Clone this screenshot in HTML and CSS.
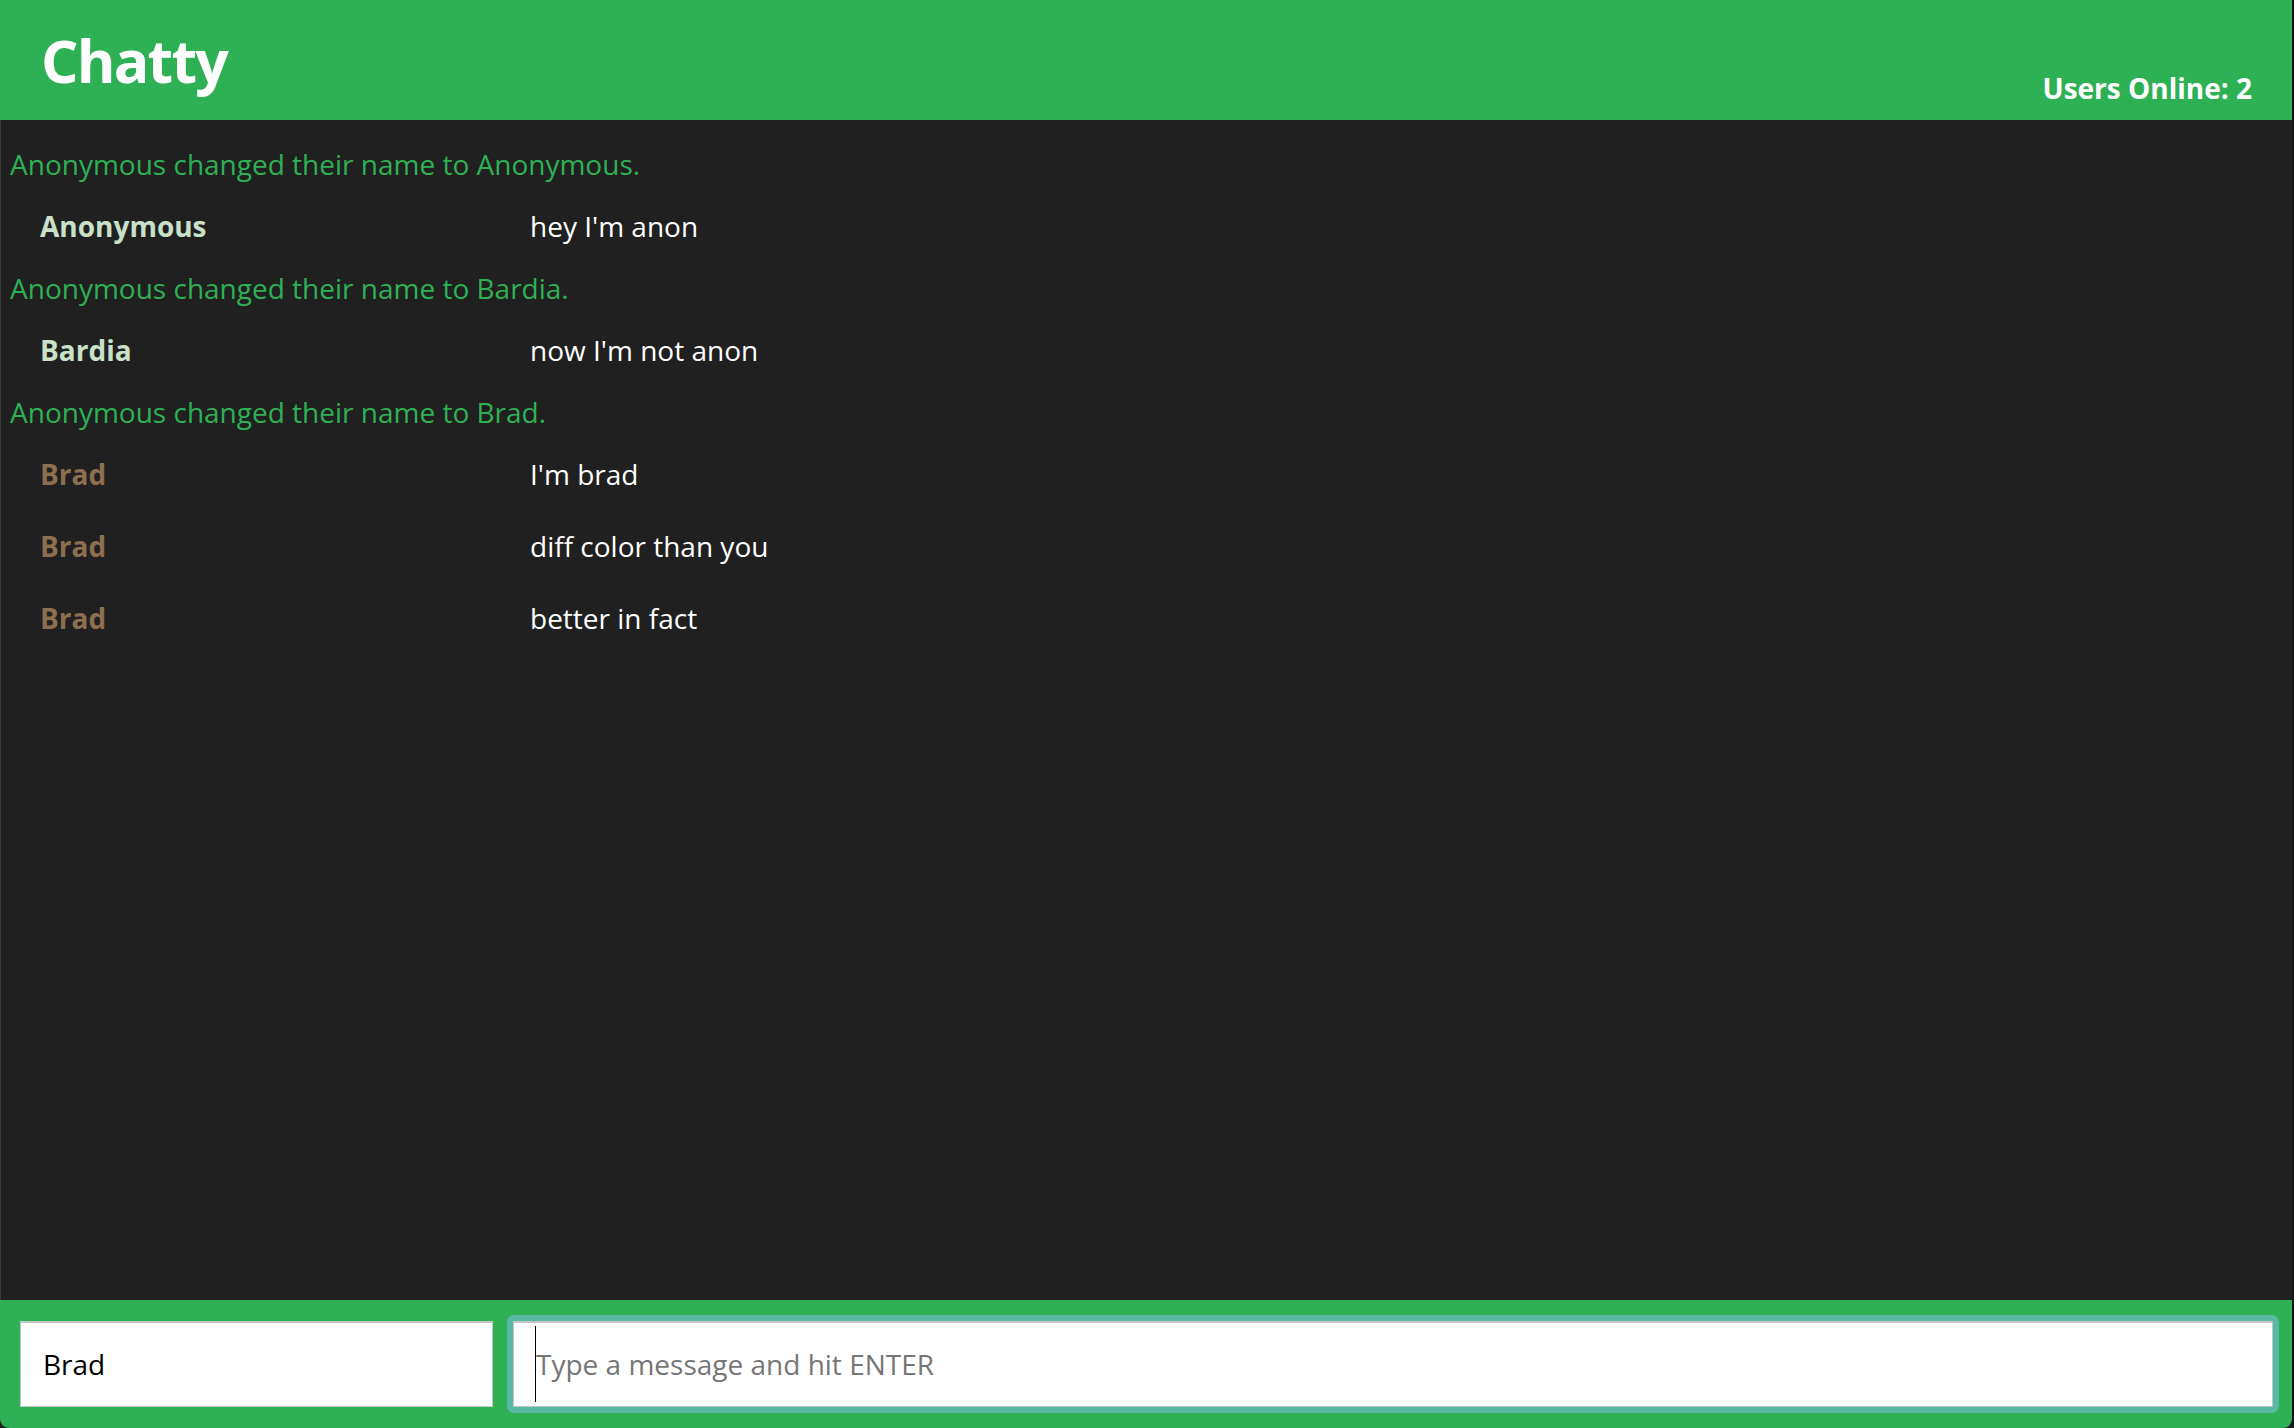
FILE: index.html
```html
<!DOCTYPE html>
<html lang="en">
<head>
<meta charset="utf-8">
<title>Chatty</title>
<link rel="stylesheet" href="styles.css">
</head>
<body>
<div class="app">
  <header class="navbar">
    <h1 class="brand">Chatty</h1>
    <span class="online">Users Online: 2</span>
  </header>
  <main class="messages">
    <div class="notification">Anonymous changed their name to Anonymous.</div>
    <div class="message">
      <span class="username light">Anonymous</span>
      <span class="content">hey I'm anon</span>
    </div>
    <div class="notification">Anonymous changed their name to Bardia.</div>
    <div class="message">
      <span class="username light">Bardia</span>
      <span class="content">now I'm not anon</span>
    </div>
    <div class="notification">Anonymous changed their name to Brad.</div>
    <div class="message">
      <span class="username brown">Brad</span>
      <span class="content">I'm brad</span>
    </div>
    <div class="message">
      <span class="username brown">Brad</span>
      <span class="content">diff color than you</span>
    </div>
    <div class="message">
      <span class="username brown">Brad</span>
      <span class="content">better in fact</span>
    </div>
  </main>
  <footer class="chatbar">
    <input class="field name-field" type="text" value="Brad">
    <div class="ring">
      <input class="field msg-field" type="text" placeholder="Type a message and hit ENTER">
      <span class="caret"></span>
    </div>
  </footer>
</div>
</body>
</html>
```

FILE: styles.css
```css
html, body {
  margin: 0;
  padding: 0;
}
body {
  background: #161616;
  font-family: "Open Sans", "Noto Sans", sans-serif;
  width: 2294px;
  height: 1428px;
  overflow: hidden;
}
.app {
  width: 2292px;
  height: 1428px;
  display: flex;
  flex-direction: column;
  background: #202020;
}
.navbar {
  height: 120px;
  flex: 0 0 120px;
  background: #2eb155;
  display: flex;
  justify-content: space-between;
  align-items: flex-start;
  padding: 0 40px 0 41px;
  box-sizing: border-box;
}
.brand {
  margin: 0;
  color: #ffffff;
  font-size: 59px;
  font-weight: 700;
  letter-spacing: -1.8px;
  line-height: 1;
  padding-top: 31px;
}
.online {
  color: #ffffff;
  font-size: 28px;
  font-weight: 700;
  line-height: 1;
  padding-top: 74px;
}
.messages {
  flex: 1;
  padding: 18px 0 0 9px;
  border-left: 1px solid #3a3a3a;
  box-sizing: border-box;
  font-size: 28px;
}
.notification {
  color: #2eb155;
  line-height: 52px;
  height: 52px;
}
.message {
  display: flex;
  height: 72px;
  line-height: 72px;
  padding-left: 30px;
}
.username {
  width: 490px;
  font-weight: 700;
}
.username.light { color: #c9e0c9; }
.username.brown { color: #8c6f4f; }
.content {
  color: #ffffff;
}
.chatbar {
  flex: 0 0 128px;
  height: 128px;
  box-sizing: border-box;
  background: #2eb155;
  border-radius: 0 0 9px 9px;
  padding: 21px 13px 21px 20px;
  display: flex;
  align-items: center;
  gap: 14px;
}
.field {
  height: 86px;
  box-sizing: border-box;
  border: 1px solid #c4c4c4;
  border-top: 2px solid #c4c4c4;
  background: #ffffff;
  font-family: "Open Sans", "Noto Sans", sans-serif;
  font-size: 28px;
  color: #000000;
  padding: 0 0 2px 22px;
  margin: 0;
  outline: none;
}
.name-field {
  width: 473px;
  flex: 0 0 473px;
}
.ring {
  flex: 1;
  padding: 6px;
  background: #58b9a5;
  border-radius: 7px;
  display: flex;
  position: relative;
}
.msg-field {
  flex: 1;
  width: 100%;
}
.msg-field::placeholder {
  color: #767676;
}
.caret {
  position: absolute;
  left: 28px;
  top: 11px;
  width: 1px;
  height: 76px;
  background: #000000;
}
```
